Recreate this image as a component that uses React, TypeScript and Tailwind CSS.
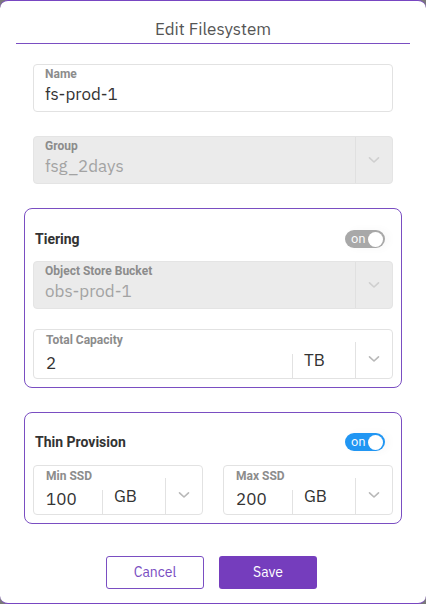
import React from "react";

const FONT = { fontFamily: '"IBM Plex Sans", "Noto Sans", "Open Sans", sans-serif' };
const LABEL = { fontFamily: 'Roboto, "Noto Sans", sans-serif' };

function Chevron({ color = "#b8b8b8" }: { color?: string }) {
  return (
    <svg width="12" height="8" viewBox="0 0 12 8" fill="none">
      <path d="M1.5 1.8 L6 6 L10.5 1.8" stroke={color} strokeWidth="1.6" strokeLinecap="round" strokeLinejoin="round" />
    </svg>
  );
}

function Toggle({ color }: { color: string }) {
  return (
    <div className="relative">
      <div
        className="relative flex h-[18px] w-[40px] items-center justify-between rounded-full pl-[6px] pr-[2px] shadow-[4px_0_10px_rgba(0,0,0,0.03)]"
        style={{ backgroundColor: color }}
      >
        <span className="text-[13px] leading-none text-white" style={{ ...FONT, marginTop: -1 }}>on</span>
        <span className="h-[15px] w-[15px] rounded-full bg-white" />
      </div>
    </div>
  );
}

function Label({ children }: { children: React.ReactNode }) {
  return (
    <div className="text-[12px] font-bold leading-[14px] text-[#8c8c8c]" style={LABEL}>
      {children}
    </div>
  );
}

function TextField({ label, value }: { label: string; value: string }) {
  return (
    <div className="flex h-[48px] flex-col rounded-[4px] border border-[#e2e2e2] bg-white pl-[11px] pt-[2px]">
      <Label>{label}</Label>
      <div className="mt-[2px] text-[17px] leading-[22px] text-[#333]" style={FONT}>{value}</div>
    </div>
  );
}

function DisabledSelect({ label, value }: { label: string; value: string }) {
  return (
    <div className="flex h-[48px] rounded-[4px] border border-[#e4e4e4] bg-[#ebebeb]">
      <div className="flex flex-1 flex-col pl-[11px] pt-[2px]">
        <Label>{label}</Label>
        <div className="mt-[2px] text-[17px] leading-[22px] text-[#a3a3a3]" style={FONT}>{value}</div>
      </div>
      <div className="flex w-[37px] items-center justify-center border-l border-[#e0e0e0]">
        <Chevron color="#cfcfcf" />
      </div>
    </div>
  );
}

function UnitField({ label, value, unit }: { label: string; value: string; unit: string }) {
  return (
    <div className="flex h-[50px] rounded-[4px] border border-[#e2e2e2] bg-white">
      <div className="flex flex-1 flex-col pl-[12px] pt-[3px]">
        <Label>{label}</Label>
        <div className="mt-[5px] text-[17px] leading-[22px] text-[#333]" style={FONT}>{value}</div>
      </div>
      <div className="flex flex-col justify-end">
        <div className="flex h-[24px] w-[63px] items-start border-l border-[#e2e2e2] pl-[11px]">
          <span className="-mt-[5px] text-[17px] leading-[22px] text-[#333]" style={FONT}>{unit}</span>
        </div>
      </div>
      <div className="flex flex-col justify-end">
        <div className="flex h-[36px] w-[37px] items-center justify-center border-l border-[#e2e2e2] pb-[2px]">
          <Chevron />
        </div>
      </div>
    </div>
  );
}

export default function App() {
  return (
    <div className="h-[604px] w-[426px] bg-[#7a7a7a]" style={FONT}>
      <div className="flex h-[604px] w-[426px] flex-col rounded-[8px] border-t border-b border-[#7846c2] bg-white">
        <div className="pt-[17px] text-center text-[17px] leading-[22px] text-[#555]">Edit Filesystem</div>
        <div className="mx-[16px] mt-[3px] h-px bg-[#7a4ec2]" />

        <div className="mx-[33px] mt-[20px]">
          <TextField label="Name" value="fs-prod-1" />
        </div>
        <div className="mx-[33px] mt-[24px]">
          <DisabledSelect label="Group" value="fsg_2days" />
        </div>

        <div className="mx-[24px] mt-[24px] rounded-[8px] border border-[#7a4ec2] px-[8px] pb-[8px]">
          <div className="flex h-[52px] items-center justify-between pl-[2px] pr-[8px] pt-[8px]">
            <span className="text-[14px] font-bold text-[#333]" style={LABEL}>Tiering</span>
            <Toggle color="#a8a8a8" />
          </div>
          <DisabledSelect label="Object Store Bucket" value="obs-prod-1" />
          <div className="mt-[20px]">
            <UnitField label="Total Capacity" value="2" unit="TB" />
          </div>
        </div>

        <div className="mx-[24px] mt-[24px] rounded-[8px] border border-[#7a4ec2] px-[8px] pb-[8px]">
          <div className="flex h-[52px] items-center justify-between pl-[2px] pr-[8px] pt-[6px]">
            <span className="text-[14px] font-bold text-[#333]" style={LABEL}>Thin Provision</span>
            <Toggle color="#2196f3" />
          </div>
          <div className="flex gap-[20px]">
            <div className="flex-1">
              <UnitField label="Min SSD" value="100" unit="GB" />
            </div>
            <div className="flex-1">
              <UnitField label="Max SSD" value="200" unit="GB" />
            </div>
          </div>
        </div>

        <div className="mt-[32px] flex justify-center gap-[15px] pr-[3px]">
          <button className="h-[33px] w-[98px] rounded-[3px] border border-[#7a4ec2] bg-white text-[14px] text-[#7a4ec2]">Cancel</button>
          <button className="h-[33px] w-[98px] rounded-[3px] bg-[#753dbd] text-[14px] text-white">Save</button>
        </div>
      </div>
    </div>
  );
}
